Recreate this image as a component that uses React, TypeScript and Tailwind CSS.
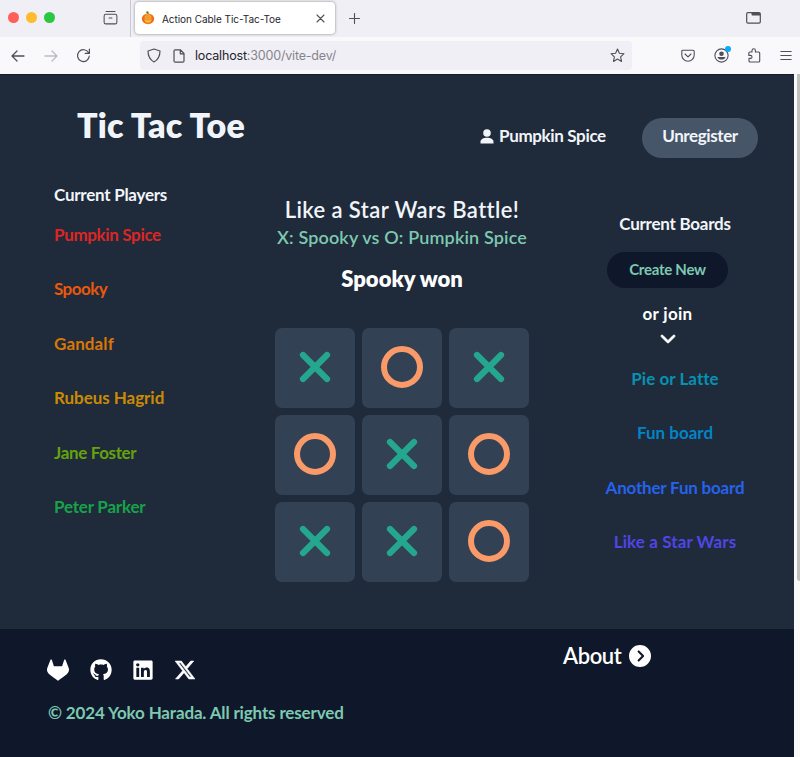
import React from "react";
import {
  FaChevronDown,
  FaCircleChevronRight,
  FaGithub,
  FaGitlab,
  FaLinkedin,
  FaXTwitter,
} from "react-icons/fa6";

const players = [
  { name: "Pumpkin Spice", style: "text-[#dc2626] tracking-[-0.35px]" },
  { name: "Spooky", style: "text-[#ea580c] tracking-[-0.55px]" },
  { name: "Gandalf", style: "text-[#d97706] tracking-[0.1px]" },
  { name: "Rubeus Hagrid", style: "text-[#ca8a04] tracking-[-0.05px]" },
  { name: "Jane Foster", style: "text-[#65a30d] tracking-[-0.35px]" },
  { name: "Peter Parker", style: "text-[#16a34a] tracking-[-0.2px]" },
];

const boards = [
  { name: "Pie or Latte", style: "text-[#0891b2] tracking-[0.05px]" },
  { name: "Fun board", style: "text-[#0284c7] tracking-[0px]" },
  { name: "Another Fun board", style: "text-[#2563eb] tracking-[-0.2px]" },
  { name: "Like a Star Wars", style: "text-[#4f46e5] tracking-[0.1px]" },
];

const cells = ["X", "O", "X", "O", "X", "O", "X", "X", "O"];

const line = {
  fill: "none",
  stroke: "currentColor",
  strokeWidth: 1.1,
  strokeLinecap: "round" as const,
  strokeLinejoin: "round" as const,
};

function Pumpkin() {
  return (
    <svg className="h-[14px] w-[14px]" viewBox="0 0 14 14">
      <path d="M6 3 5 .8 7.2.3 8 3Z" fill="#4d7c1f" />
      <ellipse cx="7" cy="7.8" rx="6.2" ry="5.4" fill="#ee6c1c" />
      <ellipse cx="7" cy="7.600" rx="3.600" ry="5" fill="#f99a2e" />
      <path d="m3.500 6.500 1.200-2 1.200 2Zm4.600 0 1.200-2 1.200 2ZM3 8.700c2.500 1 5.500 1 8 0-.8 3-7.200 3-8 0Z" fill="#ffe14a" stroke="#d0600c" strokeWidth=".3" />
    </svg>
  );
}

function TabStrip() {
  return (
    <div className="flex h-[37px] bg-[#f0eff5] text-[#4f4e59]">
      <div className="flex w-[131px] items-center border-r border-[#c9c8cf] pb-[2px] pl-[8px]">
        <span className="h-[11px] w-[11px] rounded-full bg-[#ff5f57]" />
        <span className="ml-[7px] h-[11px] w-[11px] rounded-full bg-[#febc2e]" />
        <span className="ml-[7px] h-[11px] w-[11px] rounded-full bg-[#28c840]" />
        <svg className="ml-[48px] h-[15px] w-[15px]" viewBox="0 0 16 16" {...line}>
          <path d="M3.200 1.500h9.600" />
          <rect x="1.200" y="4.500" width="13.600" height="10.300" rx="1.800" />
          <path d="M6.500 8.500h3" />
        </svg>
      </div>
      <div className="ml-[4px] mt-[2px] flex h-[32px] w-[200px] items-center rounded-[4px] bg-white pl-[6px] shadow-[0_0_3px_rgba(0,0,0,0.45)]">
        <Pumpkin />
        <span className="ml-[7px] w-[145px] whitespace-nowrap pt-[2px] font-['Inter',sans-serif] text-[10px] leading-[14px] tracking-[-0.05px] text-[#25242c]">
          Action Cable Tic-Tac-Toe
        </span>
        <svg className="ml-[9px] h-[9px] w-[9px]" viewBox="0 0 9 9" {...line}>
          <path d="m1 1 7 7M8 1 1 8" />
        </svg>
      </div>
      <svg className="ml-[14px] mt-[13px] h-[11px] w-[11px]" viewBox="0 0 11 11" {...line}>
        <path d="M5.500.5v10M.5 5.500h10" />
      </svg>
      <svg className="ml-auto mr-[39px] mt-[12px] h-[12px] w-[15px]" viewBox="0 0 15 12" {...line}>
        <rect x=".7" y=".7" width="13.600" height="10.400" rx="1.300" strokeWidth="1.200" />
        <path d="M5.500 1h8.500v2.500H6.500q-1 0-1-1Z" fill="currentColor" stroke="none" />
      </svg>
    </div>
  );
}

function Toolbar() {
  return (
    <div className="flex h-[37px] items-center bg-[#f9f9fb] pl-[11px] text-[#4f4e59]">
      <svg className="h-[14px] w-[14px]" viewBox="0 0 14 14" {...line} strokeWidth="1.300">
        <path d="M13 7H1M6 2 1 7l5 5" />
      </svg>
      <svg className="ml-[19px] h-[14px] w-[14px] text-[#bbbac1]" viewBox="0 0 14 14" {...line} strokeWidth="1.300">
        <path d="M1 7h12M8 2l5 5-5 5" />
      </svg>
      <svg className="ml-[18px] h-[15px] w-[15px]" viewBox="0 0 15 15" {...line} strokeWidth="1.200">
        <path d="M12.600 4.800A5.900 5.900 0 1 0 13.300 8M13.400 1.200v4.200H9.200" />
      </svg>
      <div className="ml-[49px] flex h-[29px] w-[492px] items-center rounded-[4px] bg-[#f0eff5] pl-[7px]">
        <svg className="h-[15px] w-[14px]" viewBox="0 0 14 15" {...line} strokeWidth="1.200">
          <path d="M7 1 1 3c0 5 1.500 8.500 6 11 4.500-2.500 6-6 6-11Z" />
        </svg>
        <svg className="ml-[12px] h-[14px] w-[12px]" viewBox="0 0 12 14" {...line} strokeWidth="1.200">
          <path d="M1 2q0-1.200 1.200-1.200H7.500L11 4.500V12q0 1.200-1.200 1.200H2.200Q1 13.200 1 12ZM7.300 1v3.800H11" />
        </svg>
        <span className="ml-[10px] w-[145px] whitespace-nowrap pt-px font-['Inter',sans-serif] text-[12.500px] leading-[16px] tracking-[-0.18px] text-[#85848c]">
          <span className="text-[#25242c]">localhost</span>:3000/vite-dev/
        </span>
        <svg className="ml-auto mr-[7px] h-[15px] w-[15px]" viewBox="0 0 15 15" {...line}>
          <path d="m7.500 1 1.900 4.200 4.600.5-3.400 3.100.9 4.600-4-2.300-4 2.300.9-4.600L1 5.700l4.600-.5Z" />
        </svg>
      </div>
      <svg className="ml-[49px] h-[13px] w-[14px]" viewBox="0 0 14 13" {...line}>
        <path d="M2 1.200h10q1.200 0 1.200 1.200V6a6.200 6.200 0 0 1-12.400 0V2.400Q.8 1.200 2 1.200ZM4 5l3 2.800L10 5" />
      </svg>
      <div className="relative ml-[19px] h-[15px] w-[15px]">
        <svg className="h-[15px] w-[15px]" viewBox="0 0 15 15" {...line}>
          <circle cx="7.500" cy="7.500" r="6.600" />
          <circle cx="7.500" cy="5.700" r="2.300" fill="currentColor" stroke="none" />
          <path d="M3.500 9h8c-.5 3.400-7.500 3.400-8 0Z" fill="currentColor" stroke="none" />
        </svg>
        <span className="absolute -right-[2px] -top-[2px] h-[6px] w-[6px] rounded-full bg-[#0aa9fb]" />
      </div>
      <svg className="ml-[18px] h-[15px] w-[14px]" viewBox="0 0 14 15" {...line}>
        <path d="M5 4V2.500a1.700 1.700 0 0 1 3.400 0V4h3.300q1 0 1 1v8q0 1-1 1H3q-1 0-1-1v-2.600h1.500a1.500 1.500 0 0 0 0-3H1.800V5q0-1 1-1Z" />
      </svg>
      <svg className="ml-[19px] h-[11px] w-[12px]" viewBox="0 0 12 11" {...line}>
        <path d="M.8 1.500h10.400M.8 5.500h10.400M.8 9.500h10.400" />
      </svg>
    </div>
  );
}

function Cell({ mark }: { mark: string }) {
  return (
    <div className="flex h-[80px] w-[80px] items-center justify-center rounded-[7px] bg-[#334155] pb-[2px]">
      {mark === "X" ? (
        <svg className="h-[32px] w-[32px] text-[#25a68f]" viewBox="0 0 32 32">
          <path d="M4 4 28 28M28 4 4 28" stroke="currentColor" strokeWidth="6.200" strokeLinecap="round" />
        </svg>
      ) : (
        <span className="h-[42px] w-[42px] rounded-full border-6 border-[#f99a68]" />
      )}
    </div>
  );
}

function Header() {
  return (
    <header className="flex h-[108px] items-start pl-[77px] pr-[36px]">
      <h1 className="mt-[30px] whitespace-nowrap text-[34px] font-extrabold leading-[40px] tracking-[0.2px] text-[#f1f5f9]">
        Tic Tac Toe
      </h1>
      <div className="ml-auto mt-[43px] flex items-center">
        <svg className="mb-[4px] h-[15px] w-[14px]" viewBox="0 0 14 15" fill="#f1f5f9">
          <circle cx="7" cy="4" r="3.800" />
          <path d="M.5 14.500v-1.800C.5 10.200 3.500 8.700 7 8.700s6.500 1.500 6.500 4v1.800Z" />
        </svg>
        <span className="mb-[4px] ml-[5px] w-[107px] whitespace-nowrap font-bold tracking-[-0.35px] text-[#f1f5f9]">Pumpkin Spice</span>
        <button className="ml-[36px] flex h-[40px] w-[116px] items-center justify-center rounded-full bg-[#475569] pb-[4px] font-bold tracking-[-0.4px] text-[#f1f5f9]">
          Unregister
        </button>
      </div>
    </header>
  );
}

function Game() {
  return (
    <section className="flex w-[254px] flex-col items-center whitespace-nowrap pt-[12px]">
      <h2 className="text-[22px] font-semibold leading-[29px] tracking-[0.4px] text-[#f1f5f9]">Like a Star Wars Battle!</h2>
      <p className="text-[18px] font-semibold leading-[26px] tracking-[0.15px] text-[#7dc9b0]">X: Spooky vs O: Pumpkin Spice</p>
      <p className="mt-[15px] text-[22px] font-extrabold leading-[28px] text-white">Spooky won</p>
      <div className="mt-[35px] grid grid-cols-3 gap-[7px]">
        {cells.map((mark, i) => (
          <Cell key={i} mark={mark} />
        ))}
      </div>
    </section>
  );
}

function Page() {
  return (
    <div className="w-[794px] font-['Lato',sans-serif] text-[17px] leading-[24px]">
      <main className="h-[555px] border-t border-[#151d2b] bg-[#1f2a3a]">
        <Header />
        <div className="flex">
          <aside className="w-[275px] pl-[54px] font-bold">
            <h3 className="tracking-[-0.25px] text-[#f1f5f9]">Current Players</h3>
            <ul className="mt-[16px] flex flex-col gap-[30.4px]">
              {players.map((p) => (
                <li key={p.name} className={p.style}>{p.name}</li>
              ))}
            </ul>
          </aside>
          <Game />
          <aside className="ml-[66px] flex w-[160px] flex-col items-center whitespace-nowrap pt-[29px] font-bold">
            <h3 className="tracking-[-0.25px] text-[#f1f5f9]">Current Boards</h3>
            <button className="mr-[15px] mt-[16px] flex h-[36px] w-[121px] items-center justify-center rounded-full bg-[#0f172a] pb-[3px] text-[15px] tracking-[-0.25px] text-[#7dc9b0]">
              Create New
            </button>
            <p className="mr-[15px] mt-[14px] tracking-[0.3px] text-white">or join</p>
            <FaChevronDown className="mr-[15px] mt-[4px] h-[16px] w-[16px] stroke-white stroke-[30px] text-white" />
            <ul className="mt-[21px] flex flex-col items-center gap-[30.4px]">
              {boards.map((b) => (
                <li key={b.name} className={b.style}>{b.name}</li>
              ))}
            </ul>
          </aside>
        </div>
      </main>
      <footer className="flex h-[128px] bg-[#0f172a] pl-[47px]">
        <div className="w-[516px] pt-[29px]">
          <div className="flex h-[23px] items-center text-white">
            <FaGitlab className="h-[22px] w-[22px]" />
            <FaGithub className="ml-[21px] h-[22px] w-[22px]" />
            <FaLinkedin className="ml-[20px] h-[22px] w-[22px]" />
            <FaXTwitter className="ml-[20px] h-[22px] w-[22px] stroke-white stroke-[14px]" />
          </div>
          <p className="mt-[20px] pl-px font-bold tracking-[-0.15px] text-[#7dc9b0]">© 2024 Yoko Harada. All rights reserved</p>
        </div>
        <div className="flex h-[28px] items-center pt-[25px] text-[22px] font-semibold text-white">
          <span className="w-[66px] pt-px tracking-[-0.4px]">About</span>
          <FaCircleChevronRight className="h-[22px] w-[22px]" />
        </div>
      </footer>
    </div>
  );
}

export default function App() {
  return (
    <div className="h-[757px] w-[800px] overflow-hidden bg-[#fbfafa]">
      <TabStrip />
      <Toolbar />
      <div className="flex">
        <Page />
        <div className="flex h-[683px] w-[6px] justify-end">
          <div className="h-[507px] w-[3px] rounded-bl-[3px] bg-[#c1c0be]" />
        </div>
      </div>
    </div>
  );
}
